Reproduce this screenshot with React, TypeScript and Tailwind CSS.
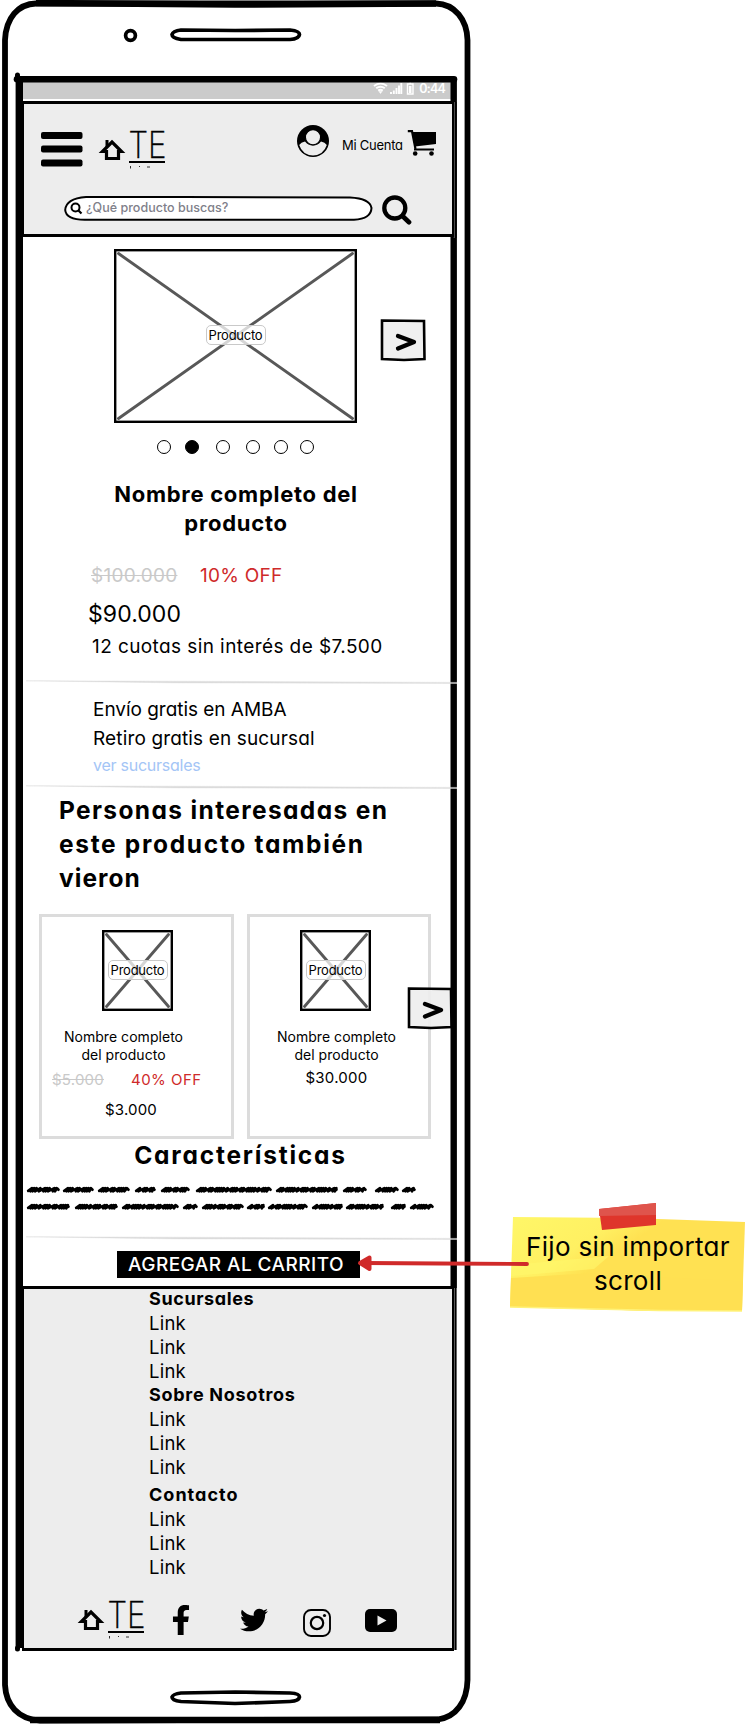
import type { ReactNode } from "react";
import { FaFacebookF, FaTwitter } from "react-icons/fa";

function Logo() {
  return (
    <svg width="70" height="42" viewBox="101 129 70 42" className="shrink-0 overflow-visible">
      <path d="M102.500 150.500 L112 141 L121.500 150.500 H118.500 V157.500 H106.500 V150.500 Z" fill="none" stroke="#000" strokeWidth="3.200" />
      <path d="M107 139 V146" stroke="#000" strokeWidth="3" />
      <text
        x="128.400"
        y="157"
        textLength="38"
        lengthAdjust="spacingAndGlyphs"
        fontFamily="Inter, sans-serif"
        fontSize="37"
        fontWeight="200"
        stroke="#000"
        strokeWidth="0.400"
      >
        TE
      </text>
      <path d="M129 161 H165" stroke="#000" strokeWidth="2.200" />
      <path d="M130.500 165 V167.500 M139 165.500 H140 M147 166 H150" stroke="#333" strokeWidth="1" />
    </svg>
  );
}

function ImageBox({ w, h, className }: { w: number; h: number; className: string }) {
  return (
    <div className={"relative flex shrink-0 items-center justify-center " + className}>
      <svg className="absolute inset-0" width={w} height={h}>
        <rect x="1.2" y="1.2" width={w - 2.4} height={h - 2.4} fill="#fff" stroke="#000" strokeWidth="2.4" />
        <path
          d={`M4.500 4.500 L${w - 4.5} ${h - 4.5} M${w - 4.5} 4.500 L4.500 ${h - 4.5}`}
          stroke="#585858"
          strokeWidth="2.9"
          strokeLinecap="round"
        />
      </svg>
      <span className="relative -top-px h-5 w-[60px] shrink-0 whitespace-nowrap rounded-[5px] border border-[#c9c9c9] bg-white/75 text-center text-[13px] leading-[18px] tracking-[-0.250px]">
        Producto
      </span>
    </div>
  );
}

function NextButton({ className }: { className: string }) {
  return (
    <button className={className} aria-label="Siguiente">
      <svg width="46" height="44" viewBox="0 0 46 44">
        <path d="M2 2.500 L44 3 L44.500 41 L24 42 L2 41 Z" fill="#ededed" fillOpacity="0.900" stroke="#000" strokeWidth="2.600" />
        <path d="M18 18 L34 24 L18 30.500" fill="none" stroke="#000" strokeWidth="4.300" strokeLinecap="round" strokeLinejoin="round" />
      </svg>
    </button>
  );
}

function Divider({ className }: { className: string }) {
  return (
    <svg width="431" height="4" className={"relative ml-1 shrink-0 " + className}>
      <path d="M0 0.800 L150 1.200 L431 2.400 V3.500 L150 2.900 Z" fill="#dcdcdc" stroke="#dcdcdc" strokeWidth="0.400" />
    </svg>
  );
}

const scribbleRows: { y: number; words: [number, number][] }[] = [
  { y: 9.7, words: [[27, 60], [63, 94], [98, 130], [135, 156], [161, 190], [196, 272], [276, 338], [343, 367], [375, 399], [402, 416]] },
  { y: 26.7, words: [[27, 70], [75, 118], [122, 179], [183, 198], [202, 244], [247, 265], [268, 308], [312, 343], [346, 384], [391, 406], [410, 434]] },
];

const strokeGaps = [4.6, 2.2, 2.4, 4.8, 2.2, 4.4, 2.3, 2.2, 2.4, 3.8];

function scribble(y: number, x0: number, x1: number) {
  let d = `M${x0 + 1.2} ${y + 1.2}`;
  let i = x0 % 7;
  for (let x = x0 + 1; x < x1 - 5.5; x += strokeGaps[i % strokeGaps.length]) {
    d += ` L${x + 4} ${y - 1.6} L${x + 2.4} ${y + 1.6}`;
    i++;
  }
  return d + ` L${x1 - 3} ${y - 1.4} L${x1 - 1.5} ${y}`;
}

function Scribbles() {
  return (
    <svg width="432" height="35" viewBox="22 0 432 35" className="mt-[10px] shrink-0">
      {scribbleRows.map((row) =>
        row.words.map(([a, b]) => (
          <path key={a + "-" + row.y} d={scribble(row.y, a, b)} fill="none" stroke="#000" strokeWidth="2.7" strokeLinecap="round" strokeLinejoin="round" />
        )),
      )}
    </svg>
  );
}

function PhoneFrame() {
  return (
    <svg className="absolute left-0 top-0" width="480" height="1724" fill="none" stroke="#000">
      <path d="M36 3.500 H436 C455 4 467 20 467.500 40 V1680 C467 1702 456 1717 438 1719.500 L40 1720.500 C18 1719 6 1705 5 1685 V40 C6 18 18 4 36 3.500 Z" strokeWidth="5.800" />
      <path d="M36 3 L235 4.500 L436 3.500 M30 1720 L235 1720 L440 1720" strokeWidth="6.500" />
      <circle cx="130.500" cy="35.500" r="4.900" strokeWidth="3.700" />
      <path d="M181 30 L235 30.500 L290 30 Q299.500 31 299.500 34.500 Q299 39 290 39.500 H181 Q172 38 172 34.500 Q173 31 181 30 Z" strokeWidth="3.700" />
      <path d="M181 1693 L235 1692 L290 1693 Q299.500 1693.500 299.500 1697 Q299 1701 290 1701.500 L235 1703.500 L181 1701.500 Q172 1700.500 172 1697 Q173 1694 181 1693 Z" strokeWidth="3.700" />
      <path d="M19.300 79 V1648" strokeWidth="7.400" />
      <path d="M453.700 79 V1288" strokeWidth="6.400" />
      <path d="M17 79.300 H454" strokeWidth="6.600" strokeLinecap="round" />
      <path d="M17.500 75 V80 M17.500 1648 V1649" strokeWidth="5" strokeLinecap="round" />
      <path d="M455.600 102 V238 M455.600 1288 V1650" strokeWidth="2" />
      <path d="M454.300 102 V238 M454.300 1288 V1650" strokeWidth="1.200" stroke="#555" />
    </svg>
  );
}

function StatusBar() {
  return (
    <div className="flex h-[19px] w-[429px] shrink-0 items-start justify-end border-b-2 border-white bg-[#cbcbcb] pr-[6px] text-white">
      <svg width="42" height="13" viewBox="0 0 42 13" className="mr-1" fill="none" stroke="#fff">
        <path d="M1 4 Q7.500 -1 14 4 M3.200 6.300 Q7.500 3 11.800 6.300 M5.200 8.600 Q7.500 7 9.800 8.600" strokeWidth="1.900" />
        <path d="M6 9.500 L7.500 11.500 L9 9.500 Z" fill="#fff" strokeWidth="0.500" />
        <path d="M18 12 V10 M20.800 12 V8.500 M23.500 12 V6 M26 12 V3.500 M28.300 12 V1" strokeWidth="1.900" />
        <path d="M34.500 2 H40 V12 H34.500 Z M36.500 1 H38" strokeWidth="1.400" />
        <path d="M37.200 4 V11" strokeWidth="2.500" />
      </svg>
      <span className="-mt-px text-[12.500px] font-semibold leading-4 tracking-[-0.800px]">0:44</span>
    </div>
  );
}

function Header() {
  return (
    <header className="relative h-[136px] w-[432px] shrink-0 border-x-2 border-y-[3px] border-black bg-[#ededed]">
      <div className="flex h-[92px] items-start">
        <svg width="42" height="35" className="ml-[17px] mt-[28px]">
          <rect width="41.500" height="7" rx="2" />
          <rect y="13.500" width="41.500" height="7" rx="2" />
          <rect y="27.500" width="41.500" height="7" rx="2" />
        </svg>
        <div className="ml-[18px] mt-[26px]">
          <Logo />
        </div>
        <svg width="32" height="32" className="ml-[126px] mt-[21px]">
          <circle cx="16" cy="16" r="16" />
          <path d="M2.200 20 Q4 17 8 16.500 Q11 20.500 16 20.500 Q21 20.500 24 16.500 Q28 17 29.800 20 Q26.500 30 16 30.500 Q5.500 30 2.200 20 Z" fill="#ededed" />
          <circle cx="16" cy="12.300" r="7.600" fill="#ededed" stroke="#000" strokeWidth="1.200" />
        </svg>
        <span className="ml-[13px] mt-[31px] w-[61px] whitespace-nowrap text-[13px] leading-5 tracking-[-0.250px]">Mi Cuenta</span>
        <svg width="30" height="26" className="ml-[4px] mt-[26px]">
          <path d="M0.800 1.200 H5 L8.500 19" fill="none" stroke="#000" strokeWidth="2.200" />
          <path d="M5.500 2 H29 V14 L8 16.500 Z" />
          <path d="M7 19.500 H27" stroke="#000" strokeWidth="2" />
          <circle cx="8.200" cy="23.500" r="2.300" />
          <circle cx="24.500" cy="23.500" r="2.300" />
        </svg>
      </div>
      <div className="flex items-start">
        <div className="relative ml-[40px] flex h-6 w-[309px] items-center">
          <svg width="309" height="25" className="absolute inset-0">
            <path d="M22 1 L120 1 L286 1.500 Q306 2.500 307.500 12 Q307 23 290 23.700 H22 Q2 24 1.200 14 Q2 2.500 22 1 Z" fill="#fff" stroke="#000" strokeWidth="2" />
            <circle cx="11.500" cy="11.500" r="4" fill="none" stroke="#000" strokeWidth="2" />
            <path d="M14.500 14.500 L17.500 17.500" stroke="#000" strokeWidth="2.200" />
          </svg>
          <span className="relative ml-[22px] whitespace-nowrap text-[12.500px] font-medium leading-5 tracking-[0.020px] text-[#80808a]">¿Qué producto buscas?</span>
        </div>
        <svg width="30" height="30" className="-mt-px ml-[9px]">
          <circle cx="12.800" cy="13" r="10.500" fill="none" stroke="#000" strokeWidth="4.300" />
          <path d="M20.500 21 L27 27.200" stroke="#000" strokeWidth="4.700" strokeLinecap="round" />
        </svg>
      </div>
    </header>
  );
}

const dots = ["ml-[135px]", "ml-[14px] bg-black", "ml-[17px]", "ml-[16px]", "ml-[14px]", "ml-[12px]"];

function Product() {
  return (
    <>
      <div className="flex h-[185px] shrink-0 items-start pt-3">
        <ImageBox w={243} h={174} className="ml-[92px] h-[174px] w-[243px]" />
        <NextButton className="ml-[23px] mt-[69px]" />
      </div>
      <div className="mt-[18px] flex h-[14px] shrink-0">
        {dots.map((c, i) => (
          <span key={i} className={"size-[14px] rounded-full border border-black " + c} />
        ))}
      </div>
      <h1 className="mt-[26px] w-[428px] shrink-0 text-center text-[22px] font-bold leading-[29px] tracking-[0.720px]">
        Nombre completo del
        <br />
        producto
      </h1>
      <div className="mt-[26px] flex shrink-0 whitespace-nowrap text-[19px] leading-6 tracking-[0.260px]">
        <s className="ml-[69px] w-[109px] text-[#c9c9c9]">$100.000</s>
        <span className="text-[#cf2a2a]">10% OFF</span>
      </div>
      <p className="ml-[66px] mt-[11px] shrink-0 text-[23px] leading-[30px] tracking-[0.070px]">$90.000</p>
      <p className="ml-[70px] mt-[6px] shrink-0 whitespace-nowrap text-[19px] leading-6 tracking-[0.410px]">12 cuotas sin interés de $7.500</p>
      <Divider className="mt-[21px]" />
      <div className="ml-[71px] mt-[14px] flex shrink-0 flex-col gap-[5px] whitespace-nowrap text-[19px] leading-6">
        <p className="tracking-[-0.030px]">Envío gratis en AMBA</p>
        <p className="tracking-[0.140px]">Retiro gratis en sucursal</p>
        <a className="-mt-px text-[16px] leading-5 tracking-[-0.250px] text-[#a4c5f6]">ver sucursales</a>
      </div>
      <Divider className="mt-[10px]" />
    </>
  );
}

function Card({ className, children }: { className: string; children: ReactNode }) {
  return <article className={"flex h-[225px] shrink-0 flex-col border-[3px] border-[#dcdcdc] " + className}>{children}</article>;
}

function Related() {
  return (
    <>
      <h2 className="ml-[37px] mt-1 shrink-0 whitespace-nowrap text-[24.500px] font-bold leading-[34px]">
        <span className="tracking-[1.370px]">Personas interesadas en</span>
        <br />
        <span className="tracking-[1.680px]">este producto también</span>
        <br />
        <span className="tracking-[1.050px]">vieron</span>
      </h2>
      <div className="relative ml-[17px] mt-[19px] flex shrink-0 gap-[13px]">
        <Card className="w-[195px]">
          <ImageBox w={71} h={81} className="ml-[60px] mt-[13px] h-[81px] w-[71px]" />
          <p className="mt-[17px] w-[163px] text-center text-[14px] leading-[18px] tracking-[0.040px]">
            Nombre completo
            <br />
            del producto
          </p>
          <div className="mt-[6px] flex whitespace-nowrap text-[15px] leading-5">
            <s className="ml-[10px] w-[79px] tracking-[0.220px] text-[#c9c9c9]">$5.000</s>
            <span className="tracking-[0.480px] text-[#cf2a2a]">40% OFF</span>
          </div>
          <p className="mt-[10px] w-[178px] text-center text-[15px] leading-5 tracking-[0.180px]">$3.000</p>
        </Card>
        <Card className="w-[184px]">
          <ImageBox w={71} h={81} className="ml-[50px] mt-[13px] h-[81px] w-[71px]" />
          <p className="mt-[17px] w-[173px] text-center text-[14px] leading-[18px] tracking-[0.040px]">
            Nombre completo
            <br />
            del producto
          </p>
          <p className="mt-[4px] w-[173px] text-center text-[15px] leading-5 tracking-[0.240px]">$30.000</p>
        </Card>
        <NextButton className="absolute left-[368px] top-[72px]" />
      </div>
    </>
  );
}

const footerGroups = [
  { title: "Sucursales", className: "-mt-[2px]", track: "tracking-[0.600px]" },
  { title: "Sobre Nosotros", className: "", track: "tracking-[0.720px]" },
  { title: "Contacto", className: "mt-1", track: "tracking-[1.020px]" },
];

function Footer() {
  return (
    <footer className="relative mt-2 h-[365px] w-[432px] shrink-0 border-x-2 border-y-[3px] border-black bg-[#ededed]">
      {footerGroups.map((g) => (
        <div key={g.title} className={"ml-[125px] flex flex-col whitespace-nowrap text-[18.500px] leading-6 tracking-[0.250px] " + g.className}>
          <h3 className={"text-[18px] font-bold " + g.track}>{g.title}</h3>
          <a>Link</a>
          <a>Link</a>
          <a>Link</a>
        </div>
      ))}
      <div className="mt-[21px] flex items-start">
        <div className="ml-[56px]">
          <Logo />
        </div>
        <FaFacebookF className="ml-[16px] mt-[5px] h-[30px] w-[30px]" />
        <FaTwitter className="ml-[44px] mt-[6px] h-[28px] w-[28px]" />
        <svg width="28" height="28" className="ml-[35px] mt-[9px]" fill="none" stroke="#000">
          <rect x="1" y="1" width="26" height="26" rx="7" strokeWidth="1.900" />
          <circle cx="14" cy="14" r="6.200" strokeWidth="2.200" />
          <circle cx="21.500" cy="6.500" r="1.600" fill="#000" stroke="none" />
        </svg>
        <svg width="32" height="23" className="ml-[34px] mt-[9px]">
          <rect width="32" height="23" rx="5" />
          <path d="M12.500 6.500 L21.500 11.500 L12.500 16.500 Z" fill="#ededed" />
        </svg>
      </div>
    </footer>
  );
}

function Note() {
  return (
    <aside className="absolute left-[509px] top-[1201px] h-[114px] w-[237px]">
      <svg width="237" height="114" className="absolute inset-0">
        <defs>
          <linearGradient id="note" x1="0" y1="0" x2="1" y2="0.600">
            <stop offset="0" stopColor="#fff768" />
            <stop offset="0.350" stopColor="#fff062" />
            <stop offset="0.500" stopColor="#ffe152" />
          </linearGradient>
        </defs>
        <path d="M4 16 L120 17 L236 21 L233 110 L150 110 L1 106 Z" fill="url(#note)" />
        <path d="M2 77 L50 74 L110 71 L150 76 L234 80 L233 110 L150 110 L1 106 Z" fill="#ffe052" />
        <path d="M3 64 L100 55 L85 68 L2 75 Z" fill="#fff86c" fillOpacity="0.600" />
        <path d="M1 106 L150 109.500 L233 110" stroke="#fff27a" strokeWidth="1.500" fill="none" />
        <path d="M90 8 L147 2 L147 24 L93 29 Z" fill="#df352b" />
        <path d="M90 8 L147 2 L147 14 L90 15 Z" fill="#df544c" />
      </svg>
      <p className="relative ml-[6px] mt-[29px] w-[226px] whitespace-nowrap text-center text-[26px] leading-[34px] tracking-[0.330px]">
        Fijo sin importar
        <br />
        scroll
      </p>
    </aside>
  );
}

export default function App() {
  return (
    <main className="relative h-[1724px] w-[746px] overflow-hidden bg-white text-black [font-family:Inter,'Noto_Sans',sans-serif] [font-feature-settings:'cv11']">
      <PhoneFrame />
      <div className="ml-[22px] flex w-[432px] flex-col pt-[82px]">
        <StatusBar />
        <Header />
        <Product />
        <Related />
        <h2 className="mt-px shrink-0 pl-[5px] text-center text-[24.500px] font-bold leading-[30px] tracking-[1.780px]">Características</h2>
        <Scribbles />
        <Divider className="mt-[21px]" />
        <button className="ml-[95px] mt-[11px] h-[27px] w-[243px] shrink-0 whitespace-nowrap bg-black pr-[5px] text-[19px] font-medium leading-[25px] tracking-[0.450px] text-white">
          AGREGAR AL CARRITO
        </button>
        <Footer />
      </div>
      <Note />
      <svg className="absolute left-[350px] top-[1250px]" width="184" height="28">
        <path d="M15 13 L90 13.500 L177 14" stroke="#d02a2a" strokeWidth="3.800" strokeLinecap="round" />
        <path d="M10 13 L19.500 7.500 V19 Z" fill="#d02a2a" stroke="#d02a2a" strokeWidth="4" strokeLinejoin="round" />
      </svg>
    </main>
  );
}
